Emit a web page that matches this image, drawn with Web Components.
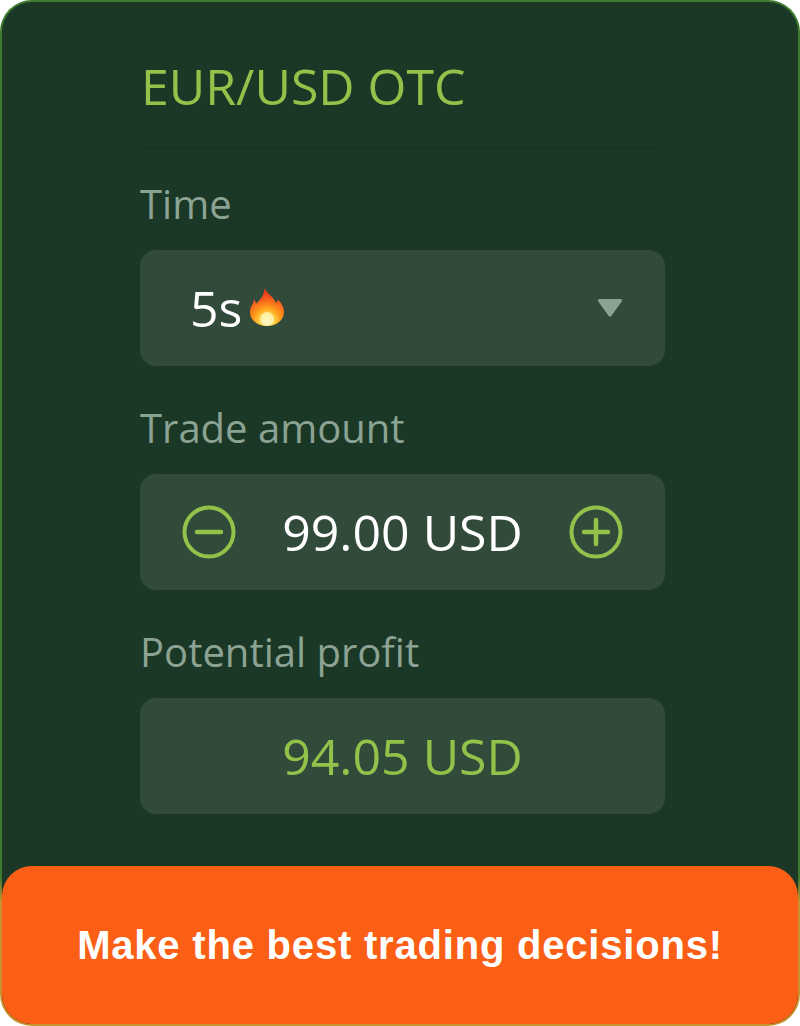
<!DOCTYPE html>
<html><head><meta charset="utf-8">
<style>
html,body{margin:0;padding:0;background:#fff}
body{width:800px;height:1026px;overflow:hidden;font-family:"Open Sans",sans-serif}
</style></head>
<body>
<template id="t-card">
<style>
:host{display:flex;flex-direction:column;box-sizing:border-box;width:800px;height:1026px;position:relative;border:2px solid transparent;background:linear-gradient(#1a3825,#1a3825) padding-box,linear-gradient(#3d7a2e 0,#3d7a2e 85.5%,#c8922e 88%,#c8922e 100%) border-box;border-radius:32px;overflow:hidden}
.content{flex:1;display:flex;flex-direction:column;padding:0 133px 0 138px}
.banner{flex:none}
</style>
<div class="content"><slot></slot></div>
<div class="banner"><slot name="banner"></slot></div>
</template>
<template id="t-title">
<style>
:host{display:block;box-sizing:border-box;height:147px;padding-top:50px;border-bottom:2px solid #183321;margin-bottom:29px;margin-right:4px;color:#93c24b;font:500 50px/68px "Open Sans",sans-serif;white-space:nowrap;padding-left:1px}
</style><slot></slot>
</template>
<template id="t-field">
<style>
:host{display:block;margin-bottom:36px}
.label{color:#8ca393;font:400 40px/52px "Open Sans",sans-serif;height:52px;margin-bottom:20px;padding-left:0;white-space:nowrap}
.box{box-sizing:border-box;height:116px;background:#314a3a;border-radius:16px;display:flex;align-items:center;color:#fff;white-space:nowrap}
</style>
<div class="label"><slot name="label"></slot></div>
<div class="box"><slot></slot></div>
</template>
<template id="t-select">
<style>
:host{display:flex;align-items:center;width:100%;box-sizing:border-box;padding:0 42px 0 50px;font:500 50px/60px "Open Sans",sans-serif;color:#fff}
.v{display:flex;align-items:center;flex:1}
svg{display:block}
.fire{margin-left:7px;margin-top:-2px}
</style>
<div class="v"><slot></slot><svg class="fire" width="36" height="38" viewBox="0 0 36 38">
<defs>
<radialGradient id="f" gradientUnits="userSpaceOnUse" cx="18" cy="33" r="30">
<stop offset="0" stop-color="#fffbe0"/><stop offset=".18" stop-color="#ffe14d"/><stop offset=".45" stop-color="#ff9c1c"/><stop offset=".8" stop-color="#f4501c"/><stop offset="1" stop-color="#e0391a"/>
</radialGradient>
</defs>
<path fill="url(#f)" d="M15 0c2 3 4 5 7 8 2 2 4 4 5 7 1-1 1.500-2 1.500-3.500C32 14 35 19 35 24c0 8-7.500 14-17 14S1 32 1 24.500c0-4 1.500-7 3-9 .5-1.500.5-3 1-4.500 1 2 1.500 3.500 2.500 4.500C10 12 16 8 15 0z"/>
<ellipse cx="18" cy="31" rx="7" ry="7" fill="#fff8c8" opacity=".7"/>
</svg></div>
<svg width="26" height="20" viewBox="0 0 26 20"><path d="M2.500 1h21a1.600 1.600 0 0 1 1.200 2.600L14.300 18a1.700 1.700 0 0 1-2.600 0L1.300 3.600A1.600 1.600 0 0 1 2.500 1z" fill="#8ca393"/></svg>
</template>
<template id="t-stepper">
<style>
:host{display:flex;align-items:center;justify-content:space-between;width:100%;box-sizing:border-box;padding:0 42px 0 42px;color:#fff}
.v{font:500 50px/60px "Open Sans",sans-serif}
svg{display:block}
</style>
<svg width="54" height="54" viewBox="0 0 54 54" fill="none" stroke="#93c24b" stroke-linecap="round"><circle cx="27" cy="27" r="24.500" stroke-width="4"/><path d="M15 27h24" stroke-width="4.500"/></svg>
<span class="v"><slot></slot></span>
<svg width="54" height="54" viewBox="0 0 54 54" fill="none" stroke="#93c24b" stroke-linecap="round"><circle cx="27" cy="27" r="24.500" stroke-width="4"/><path d="M15 27h24M27 15v24" stroke-width="4.500"/></svg>
</template>
<template id="t-profit">
<style>
:host{display:block;width:100%;text-align:center;color:#93c24b;font:500 50px/60px "Open Sans",sans-serif}
</style><slot></slot>
</template>
<template id="t-banner">
<style>
:host{display:flex;align-items:center;justify-content:center;box-sizing:border-box;height:158px;background:#fb5e15;border-radius:30px 30px 0 0;color:#fff;font:700 40px/50px "Liberation Sans",Arial,sans-serif;letter-spacing:.8px;white-space:nowrap}
</style><slot></slot>
</template>

<trade-card>
  <trade-title>EUR/USD OTC</trade-title>
  <trade-field><span slot="label">Time</span><trade-select>5s</trade-select></trade-field>
  <trade-field><span slot="label">Trade amount</span><trade-stepper>99.00 USD</trade-stepper></trade-field>
  <trade-field><span slot="label">Potential profit</span><trade-profit>94.05 USD</trade-profit></trade-field>
  <trade-banner slot="banner">Make the best trading decisions!</trade-banner>
</trade-card>
<script>
for (const [n,t] of [['trade-card','t-card'],['trade-title','t-title'],['trade-field','t-field'],['trade-select','t-select'],['trade-stepper','t-stepper'],['trade-profit','t-profit'],['trade-banner','t-banner']]) {
  customElements.define(n, class extends HTMLElement {
    constructor(){super();this.attachShadow({mode:'open'}).appendChild(document.getElementById(t).content.cloneNode(true));}
  });
}
</script>
</body></html>
